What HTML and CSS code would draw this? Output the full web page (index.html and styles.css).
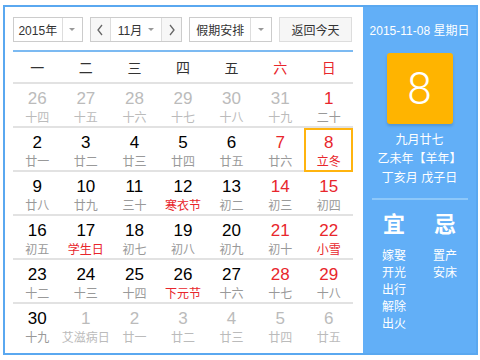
FILE: index.html
```html
<!DOCTYPE html>
<html>
<head>
    <meta charset="UTF-8">
    <link rel="stylesheet" href="styles.css">
</head>
<body>
    <div class="calendar">
        <div class="main">
            <div class="toolbar">
                <div class="select year">
                    <span class="label">2015年</span>
                    <span class="drop"><i class="caret"></i></span>
                </div>
                <div class="select month">
                    <span class="nav"><svg width="8" height="12" viewBox="0 0 8 12"><polyline points="6,1 2,6 6,11" fill="none" stroke="#666" stroke-width="1.3"/></svg></span>
                    <span class="label">11月 <i class="caret"></i></span>
                    <span class="nav"><svg width="8" height="12" viewBox="0 0 8 12"><polyline points="2,1 6,6 2,11" fill="none" stroke="#666" stroke-width="1.3"/></svg></span>
                </div>
                <div class="select holiday">
                    <span class="label">假期安排</span>
                    <span class="drop"><i class="caret"></i></span>
                </div>
                <div class="today-btn">返回今天</div>
            </div>

            <div class="week">
                <span>一</span><span>二</span><span>三</span><span>四</span><span>五</span>
                <span class="red">六</span><span class="red">日</span>
            </div>

            <div class="row">
                <div class="day other"><b>26</b><em>十四</em></div>
                <div class="day other"><b>27</b><em>十五</em></div>
                <div class="day other"><b>28</b><em>十六</em></div>
                <div class="day other"><b>29</b><em>十七</em></div>
                <div class="day other"><b>30</b><em>十八</em></div>
                <div class="day other"><b>31</b><em>十九</em></div>
                <div class="day weekend"><b>1</b><em>二十</em></div>
            </div>
            <div class="row">
                <div class="day"><b>2</b><em>廿一</em></div>
                <div class="day"><b>3</b><em>廿二</em></div>
                <div class="day"><b>4</b><em>廿三</em></div>
                <div class="day"><b>5</b><em>廿四</em></div>
                <div class="day"><b>6</b><em>廿五</em></div>
                <div class="day weekend"><b>7</b><em>廿六</em></div>
                <div class="day weekend selected"><b>8</b><em class="fest">立冬</em></div>
            </div>
            <div class="row">
                <div class="day"><b>9</b><em>廿八</em></div>
                <div class="day"><b>10</b><em>廿九</em></div>
                <div class="day"><b>11</b><em>三十</em></div>
                <div class="day"><b>12</b><em class="fest">寒衣节</em></div>
                <div class="day"><b>13</b><em>初二</em></div>
                <div class="day weekend"><b>14</b><em>初三</em></div>
                <div class="day weekend"><b>15</b><em>初四</em></div>
            </div>
            <div class="row">
                <div class="day"><b>16</b><em>初五</em></div>
                <div class="day"><b>17</b><em class="fest">学生日</em></div>
                <div class="day"><b>18</b><em>初七</em></div>
                <div class="day"><b>19</b><em>初八</em></div>
                <div class="day"><b>20</b><em>初九</em></div>
                <div class="day weekend"><b>21</b><em>初十</em></div>
                <div class="day weekend"><b>22</b><em class="fest">小雪</em></div>
            </div>
            <div class="row">
                <div class="day"><b>23</b><em>十二</em></div>
                <div class="day"><b>24</b><em>十三</em></div>
                <div class="day"><b>25</b><em>十四</em></div>
                <div class="day"><b>26</b><em class="fest">下元节</em></div>
                <div class="day"><b>27</b><em>十六</em></div>
                <div class="day weekend"><b>28</b><em>十七</em></div>
                <div class="day weekend"><b>29</b><em>十八</em></div>
            </div>
            <div class="row last">
                <div class="day"><b>30</b><em>十九</em></div>
                <div class="day other"><b>1</b><em>艾滋病日</em></div>
                <div class="day other"><b>2</b><em>廿一</em></div>
                <div class="day other"><b>3</b><em>廿二</em></div>
                <div class="day other"><b>4</b><em>廿三</em></div>
                <div class="day other"><b>5</b><em>廿四</em></div>
                <div class="day other"><b>6</b><em>廿五</em></div>
            </div>
        </div>

        <div class="side">
            <div class="side-date">2015-11-08 星期日</div>
            <div class="big-day">8</div>
            <div class="lunar">
                <div>九月廿七</div>
                <div>乙未年【羊年】</div>
                <div>丁亥月 戊子日</div>
            </div>
            <div class="divider"></div>
            <div class="almanac">
                <div class="col">
                    <div class="title">宜</div>
                    <div>嫁娶</div>
                    <div>开光</div>
                    <div>出行</div>
                    <div>解除</div>
                    <div>出火</div>
                </div>
                <div class="col">
                    <div class="title">忌</div>
                    <div>置产</div>
                    <div>安床</div>
                </div>
            </div>
        </div>
    </div>
</body>
</html>
```

FILE: styles.css
```css
body {
    margin: 0;
    font-family: "Liberation Sans", "Noto Sans CJK SC", sans-serif;
    background-color: #fff;
    color: #333;
}
.calendar {
    margin: 5px 0 0 3px;
    width: 471px;
    height: 346px;
    border: 2px solid #5aa8f0;
    display: flex;
}
.main {
    width: 340px;
    padding: 10px 10px 0 8px;
}
.toolbar {
    display: flex;
    height: 25px;
    padding-bottom: 8px;
    border-bottom: 2px solid #7cbaf2;
    font-size: 12px;
}
.select {
    display: flex;
    border: 1px solid #ccc;
    box-sizing: border-box;
    height: 25px;
    margin-right: 7px;
    background-color: #fff;
}
.select .label {
    display: flex;
    align-items: center;
    justify-content: center;
}
.select .drop {
    width: 20px;
    border-left: 1px solid #ddd;
    display: flex;
    align-items: center;
    justify-content: center;
}
.caret {
    display: inline-block;
    width: 0;
    height: 0;
    border-left: 3px solid transparent;
    border-right: 3px solid transparent;
    border-top: 3px solid #999;
    margin-left: 6px;
}
.drop .caret {
    margin-left: 0;
}
.year {
    width: 70px;
}
.year .label {
    width: 49px;
}
.month {
    width: 92px;
}
.month .nav {
    width: 19px;
    display: flex;
    align-items: center;
    justify-content: center;
    background-color: #f7f7f7;
}
.month .label {
    width: 52px;
    border-left: 1px solid #ddd;
    border-right: 1px solid #ddd;
}
.holiday {
    width: 83px;
}
.holiday .label {
    width: 62px;
}
.today-btn {
    width: 73px;
    height: 25px;
    box-sizing: border-box;
    border: 1px solid #ddd;
    background-color: #f6f6f6;
    display: flex;
    align-items: center;
    justify-content: center;
}
.week {
    display: grid;
    grid-template-columns: repeat(7, 1fr);
    height: 30px;
    border-bottom: 2px solid #e2e2e2;
    font-size: 14px;
    color: #333;
    align-items: center;
    text-align: center;
}
.red {
    color: #e8262c;
}
.row {
    display: grid;
    grid-template-columns: repeat(7, 1fr);
    height: 42px;
    border-bottom: 2px solid #e2e2e2;
}
.row.last {
    border-bottom: none;
}
.day {
    text-align: center;
    padding-top: 6px;
    box-sizing: border-box;
}
.day b {
    display: block;
    font-weight: normal;
    font-size: 17px;
    line-height: 18px;
    color: #000;
}
.day em {
    display: block;
    font-style: normal;
    font-size: 12px;
    line-height: 16px;
    margin-top: 2px;
    color: #999;
}
.day.weekend b {
    color: #e8262c;
}
.day.other b {
    color: #bbb;
}
.day.other em {
    color: #bbb;
}
.day em.fest {
    color: #e8262c;
}
.day.selected {
    border: 2px solid #ffb40f;
    margin-bottom: -2px;
    padding-top: 4px;
}
.side {
    flex: 1;
    background-color: #62aff7;
    color: #fff;
    display: flex;
    flex-direction: column;
    align-items: center;
}
.side-date {
    font-size: 12px;
    margin-top: 16px;
    line-height: 16px;
}
.big-day {
    width: 66px;
    height: 71px;
    margin-top: 14px;
    background-color: #ffb400;
    border-radius: 3px;
    box-shadow: 0 2px 3px rgba(0, 0, 0, 0.15);
    font-family: Roboto, "Liberation Sans", sans-serif;
    font-weight: 300;
    font-size: 44px;
    display: flex;
    align-items: center;
    justify-content: center;
}
.lunar {
    margin-top: 7px;
    font-size: 12px;
    line-height: 19px;
    text-align: center;
}
.divider {
    width: 96px;
    height: 2px;
    background-color: #8dc8fa;
    margin-top: 10px;
}
.almanac {
    display: flex;
    gap: 27px;
    margin-top: 12px;
    font-size: 12px;
    line-height: 17px;
}
.almanac .title {
    font-size: 22px;
    font-weight: bold;
    line-height: 26px;
    margin-bottom: 10px;
    text-align: center;
}
```
